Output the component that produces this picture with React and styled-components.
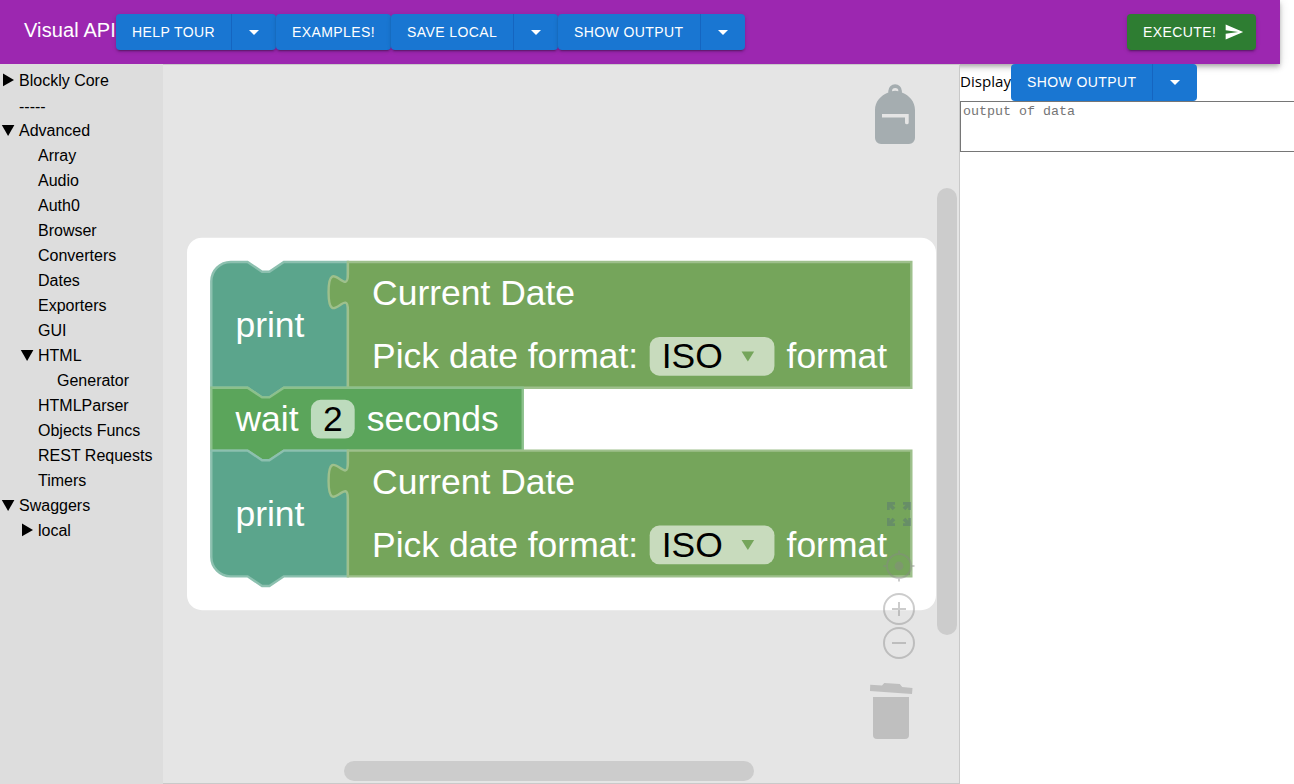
import React from "react";
import styled, { createGlobalStyle, css } from "styled-components";

const Global = createGlobalStyle`
  *, *::before, *::after { box-sizing: border-box; }
  html, body { margin: 0; height: 100%; overflow: hidden; background: #fff; }
  body { font-family: "Open Sans", sans-serif; font-size: 16px; color: #000; }
`;

const Page = styled.div`
  display: flex;
  flex-direction: column;
  width: 1294px;
  height: 784px;
  overflow: hidden;
`;

const AppBar = styled.header`
  flex: none;
  display: flex;
  align-items: center;
  width: 1280px;
  height: 64px;
  padding: 0 24px;
  background: #9c27b0;
  box-shadow: 0 2px 4px -1px rgba(0, 0, 0, 0.2), 0 4px 5px rgba(0, 0, 0, 0.14),
    0 1px 10px rgba(0, 0, 0, 0.12);
`;

const Title = styled.h1`
  margin: 0;
  width: 92px;
  padding-bottom: 4px;
  font: 400 20px/32px "Liberation Sans", Arial, sans-serif;
  letter-spacing: 0.12px;
  white-space: nowrap;
  color: #fff;
`;

const Spacer = styled.div`
  flex: 1;
`;

const raised = css`
  box-shadow: 0 3px 1px -2px rgba(0, 0, 0, 0.2), 0 2px 2px rgba(0, 0, 0, 0.14),
    0 1px 5px rgba(0, 0, 0, 0.12);
`;

const Group = styled.div`
  flex: none;
  display: flex;
  width: ${(p) => p.$width}px;
  height: ${(p) => p.$height || 36}px;
  padding-bottom: ${(p) => (p.$flat ? 1 : 0)}px;
  border-radius: 4px;
  overflow: hidden;
  background: ${(p) => (p.$green ? "#2e7d32" : "#1976d2")};
  ${(p) => !p.$flat && raised}
`;

const Button = styled.button`
  flex: 1;
  display: flex;
  align-items: center;
  justify-content: flex-start;
  gap: 8px;
  padding: 0 0 0 16px;
  border: 0;
  background: transparent;
  color: #fff;
  font: 400 14px/24px "Liberation Sans", Arial, sans-serif;
  letter-spacing: 0.4px;
  white-space: nowrap;
`;

const DropButton = styled.button`
  flex: none;
  display: flex;
  align-items: center;
  justify-content: center;
  width: 45px;
  padding: 0;
  border: 0;
  border-left: 1px solid #1565c0;
  background: transparent;
`;

const Body = styled.main`
  flex: 1;
  display: flex;
  min-height: 0;
`;

const Toolbox = styled.nav`
  position: relative;
  flex: none;
  width: 163px;
  padding-top: 4px;
  background: #ddd;
`;

const TreeRow = styled.div`
  display: flex;
  align-items: center;
  height: 25px;
  padding-top: ${(p) => (p.$separator ? 2 : 0)}px;
  padding-left: ${(p) => p.$level * 19}px;
  font: 16px/24px "Liberation Sans", Arial, sans-serif;
  white-space: nowrap;
`;

const TreeIcon = styled.svg`
  flex: none;
  width: 19px;
  height: 25px;
`;

const Workspace = styled.section`
  position: relative;
  flex: none;
  width: 797px;
  border: solid #c9c9c9;
  border-width: 1px 1px 1px 0;
  background: #e5e5e5;
`;

const Canvas = styled.svg`
  display: block;
  width: 796px;
  height: 718px;
`;

const BlockText = styled.text`
  font: 14.667px "Liberation Sans", Arial, sans-serif;
  fill: ${(p) => (p.$dark ? "#000" : "#fff")};
`;

const Floating = styled.svg`
  position: absolute;
  left: ${(p) => p.$x}px;
  top: ${(p) => p.$y}px;
  overflow: visible;
`;

const Scrollbar = styled.div`
  position: absolute;
  left: ${(p) => p.$x}px;
  top: ${(p) => p.$y}px;
  width: ${(p) => p.$w}px;
  height: ${(p) => p.$h}px;
  border-radius: 10px;
  background: #ccc;
`;

const OutputPane = styled.aside`
  flex: 1;
  min-width: 0;
  overflow: hidden;
`;

const OutputHead = styled.div`
  display: flex;
  height: 37px;
`;

const Label = styled.span`
  width: 51px;
  font-size: 15.1px;
  line-height: 35px;
`;

const Output = styled.textarea`
  display: block;
  width: 400px;
  height: 51px;
  margin: 0;
  padding: 2px;
  border: 1px solid #767676;
  border-radius: 0;
  resize: none;
  overflow: hidden;
  font: 13.333px/15px "Liberation Mono", monospace;
  &::placeholder {
    color: #757575;
    opacity: 1;
  }
`;

const Caret = () => (
  <svg width="24" height="24" viewBox="0 0 24 24" fill="#fff">
    <path d="m7 10 5 5 5-5z" />
  </svg>
);

function SplitButton({ label, width, ...rest }) {
  return (
    <Group $width={width} {...rest}>
      <Button>{label}</Button>
      <DropButton aria-label={`${label} menu`}>
        <Caret />
      </DropButton>
    </Group>
  );
}

const categories = [
  ["Blockly Core", 0, "closed"],
  ["-----", 0],
  ["Advanced", 0, "open"],
  ["Array", 1],
  ["Audio", 1],
  ["Auth0", 1],
  ["Browser", 1],
  ["Converters", 1],
  ["Dates", 1],
  ["Exporters", 1],
  ["GUI", 1],
  ["HTML", 1, "open"],
  ["Generator", 2],
  ["HTMLParser", 1],
  ["Objects Funcs", 1],
  ["REST Requests", 1],
  ["Timers", 1],
  ["Swaggers", 0, "open"],
  ["local", 1, "closed"],
];

function Category({ name, level, state }) {
  return (
    <TreeRow $level={level} $separator={name === "-----"}>
      <TreeIcon viewBox="0 0 19 25">
        {state === "closed" && <path d="M3 5.500V18.200L14 11.900z" />}
        {state === "open" && <path d="M1.800 7H14.400L8.100 18z" />}
      </TreeIcon>
      {name}
    </TreeRow>
  );
}

function DateValue() {
  return (
    <g transform="translate(56.5 0)">
      <path
        d="M0 0H233V52H0V20c0-10-8 8-8-7.5s8 2.5 8-7.5z"
        fill="#75a55b"
        stroke="#9ec08c"
      />
      <BlockText x="10" y="17.8">Current Date</BlockText>
      <BlockText x="10" y="43.8">Pick date format:</BlockText>
      <rect x="124.8" y="31" width="51.6" height="16" rx="4" fill="#fff" fillOpacity=".6" />
      <BlockText $dark x="129.8" y="43.8">ISO</BlockText>
      <path d="M162.8 37H168L165.4 41.1z" fill="#75a55b" />
      <BlockText x="181.4" y="43.8">format</BlockText>
    </g>
  );
}

function PrintBlock({ y, last }) {
  const top = last ? "M0 0H15" : "M0 8a8 8 0 0 1 8-8H15";
  const bottom = last ? "H8a8 8 0 0 1-8-8z" : "H0z";
  return (
    <g transform={`translate(0 ${y})`}>
      <path
        d={`${top}l6 4h3l6-4H56.5V52H30l-6 4h-3l-6-4${bottom}`}
        fill="#5ba58c"
        stroke="#8cc0af"
      />
      <BlockText x="10" y="31">print</BlockText>
      <DateValue />
    </g>
  );
}

function WaitBlock({ y }) {
  return (
    <g transform={`translate(0 ${y})`}>
      <path
        d="M0 0H15l6 4h3l6-4H128.8V26H30l-6 4h-3l-6-4H0z"
        fill="#5ba55b"
        stroke="#8cc08c"
      />
      <BlockText x="10" y="18">wait</BlockText>
      <rect x="41.2" y="5" width="18.1" height="16" rx="4" fill="#fff" fillOpacity=".6" />
      <BlockText $dark x="46.2" y="18">2</BlockText>
      <BlockText x="64.3" y="18">seconds</BlockText>
    </g>
  );
}

const Backpack = () => (
  <Floating $x={712} $y={19} width="40" height="60" viewBox="0 0 40 60">
    <path
      fill="#a5adb0"
      fillRule="evenodd"
      d="M13.3 8.6V7a6.8 6.8 0 0 1 13.6 0v1.6C34.5 11.4 40 18 40 26V54a6 6 0 0 1-6 6H6a6 6 0 0 1-6-6V26C0 18 5.600 11.4 13.300 8.600zM17 7.200a15 15 0 0 1 6.400 0a3.200 3.200 0 0 0-6.400 0zM7 30V33.500H30v5a1.800 1.800 0 0 0 3.700 0V30z"
    />
  </Floating>
);

const FitIcon = () => (
  <Floating $x={724} $y={437} width="24" height="24" viewBox="0 0 24 24">
    <g fill="#546e7a" fillOpacity=".42">
      {[0, 90, 180, 270].map((a) => (
        <path key={a} transform={`rotate(${a} 12 12)`} d="M0 0H8V2.700H5.200L8.300 5.700 5.700 8.300 2.700 5.200V8H0z" />
      ))}
    </g>
  </Floating>
);

const ResetIcon = () => (
  <Floating $x={720} $y={485} width="32" height="32" viewBox="0 0 32 32">
    <g fill="none" stroke="#888" strokeWidth="2" opacity=".42">
      <circle cx="16" cy="16" r="12" />
      <path d="M16 .5V5M16 27v4.500M.5 16H5M27 16h4.500" />
      <circle cx="16" cy="16" r="4.400" fill="#888" stroke="none" />
    </g>
  </Floating>
);

const ZoomIcon = ({ y, plus }) => (
  <Floating $x={720} $y={y} width="32" height="32" viewBox="0 0 32 32">
    <g fill="none" stroke="#888" strokeWidth="2" opacity=".42">
      <circle cx="16" cy="16" r="15" />
      <path d={plus ? "M9 16H23M16 9V23" : "M9 16H23"} />
    </g>
  </Floating>
);

const Trash = () => (
  <Floating $x={707} $y={618} width="43" height="57" viewBox="0 0 43 57">
    <g fill="#bfbfbf">
      <path d="M.2 1.800 12 2.600 14.300 0 29.800 1 32.200 4 42.500 5 42 10.900 0 8z" />
      <path d="M3 14H39V52a4 4 0 0 1-4 4H7a4 4 0 0 1-4-4z" />
    </g>
  </Floating>
);

export default function App() {
  return (
    <Page>
      <Global />
      <AppBar>
        <Title>Visual API</Title>
        <SplitButton label="HELP TOUR" width={160} />
        <Group $width={115}>
          <Button>EXAMPLES!</Button>
        </Group>
        <SplitButton label="SAVE LOCAL" width={167} />
        <SplitButton label="SHOW OUTPUT" width={187} />
        <Spacer />
        <Group $width={129} $green>
          <Button>
            EXECUTE!
            <svg width="20" height="20" viewBox="0 0 24 24" fill="#fff">
              <path d="M2.010 21 23 12 2.010 3 2 10l15 2-15 2z" />
            </svg>
          </Button>
        </Group>
      </AppBar>
      <Body>
        <Toolbox>
          {categories.map(([name, level, state]) => (
            <Category key={name} name={name} level={level} state={state} />
          ))}
        </Toolbox>
        <Workspace>
          <Canvas viewBox="0 0 796 718">
            <rect x="24" y="172.700" width="749" height="372.500" rx="15" fill="#fff" />
            <g transform="translate(48.300 197) scale(2.418)">
              <PrintBlock y={0} />
              <WaitBlock y={52} />
              <PrintBlock y={78} last />
            </g>
          </Canvas>
          <Backpack />
          <FitIcon />
          <ResetIcon />
          <ZoomIcon y={528} plus />
          <ZoomIcon y={562} />
          <Trash />
          <Scrollbar $x={774} $y={123} $w={20} $h={447} />
          <Scrollbar $x={181} $y={696} $w={410} $h={20} />
        </Workspace>
        <OutputPane>
          <OutputHead>
            <Label>Display</Label>
            <SplitButton label="SHOW OUTPUT" width={186} $height={37} $flat />
          </OutputHead>
          <Output placeholder="output of data" />
        </OutputPane>
      </Body>
    </Page>
  );
}
